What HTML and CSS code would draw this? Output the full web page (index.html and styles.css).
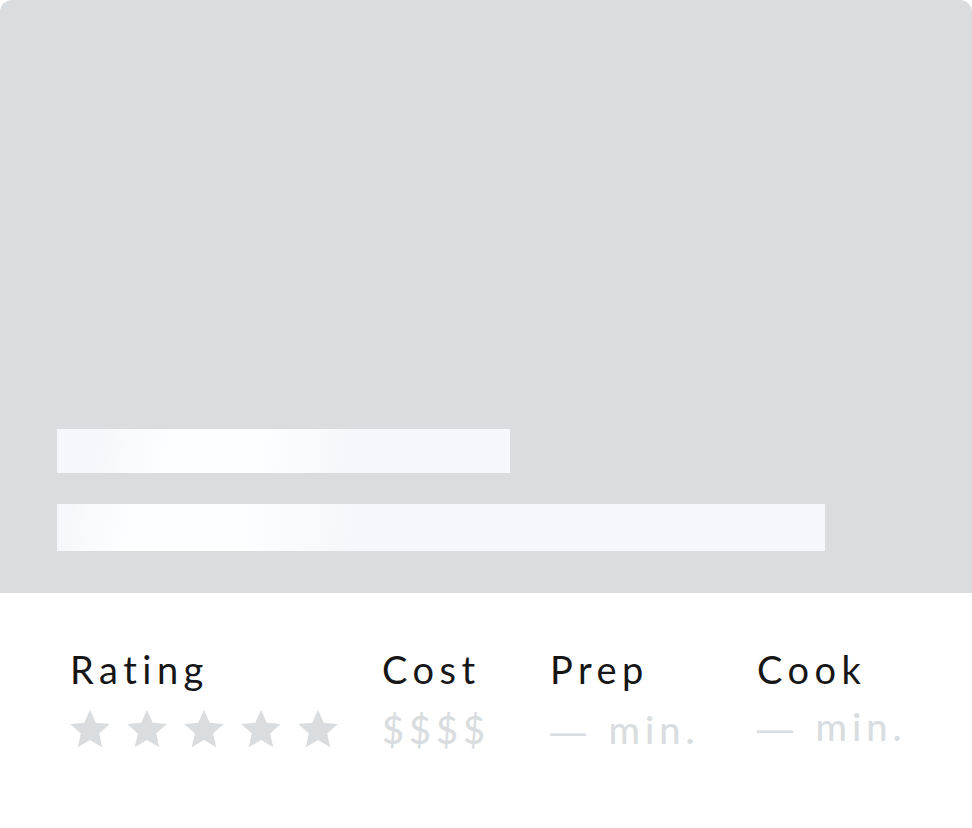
FILE: index.html
```html
<!DOCTYPE html>
<html lang="en">
<head>
    <meta charset="UTF-8">
    <meta name="viewport" content="width=device-width, initial-scale=1.0">
    <title>Recipe Card - Loading</title>
    <link rel="stylesheet" href="styles.css">
</head>
<body>
    <div class="card">
        <div class="card-hero">
            <div class="skeleton skeleton-short"></div>
            <div class="skeleton skeleton-long"></div>
        </div>

        <div class="card-info">
            <div class="info-col col-rating">
                <h3>Rating</h3>
                <div class="stars">
                    <svg viewBox="0 0 24 24"><path d="M12 1.5l3.1 7.1 7.7.7-5.8 5.1 1.7 7.6L12 18l-6.7 4 1.7-7.6-5.8-5.1 7.7-.7z"/></svg>
                    <svg viewBox="0 0 24 24"><path d="M12 1.5l3.1 7.1 7.7.7-5.8 5.1 1.7 7.6L12 18l-6.7 4 1.7-7.6-5.8-5.1 7.7-.7z"/></svg>
                    <svg viewBox="0 0 24 24"><path d="M12 1.5l3.1 7.1 7.7.7-5.8 5.1 1.7 7.6L12 18l-6.7 4 1.7-7.6-5.8-5.1 7.7-.7z"/></svg>
                    <svg viewBox="0 0 24 24"><path d="M12 1.5l3.1 7.1 7.7.7-5.8 5.1 1.7 7.6L12 18l-6.7 4 1.7-7.6-5.8-5.1 7.7-.7z"/></svg>
                    <svg viewBox="0 0 24 24"><path d="M12 1.5l3.1 7.1 7.7.7-5.8 5.1 1.7 7.6L12 18l-6.7 4 1.7-7.6-5.8-5.1 7.7-.7z"/></svg>
                </div>
            </div>
            <div class="info-col col-cost">
                <h3>Cost</h3>
                <p class="placeholder">$$$$</p>
            </div>
            <div class="info-col col-prep">
                <h3>Prep</h3>
                <p class="placeholder"><span class="dash">—</span> min.</p>
            </div>
            <div class="info-col col-cook">
                <h3>Cook</h3>
                <p class="placeholder placeholder-cook"><span class="dash">—</span> min.</p>
            </div>
        </div>
    </div>
</body>
</html>
```

FILE: styles.css
```css
body {
    margin: 0;
    padding: 0;
    background-color: #ffffff;
    font-family: Lato, "Open Sans", sans-serif;
}

.card {
    width: 972px;
    height: 828px;
    border-radius: 12px;
    overflow: hidden;
    background-color: #ffffff;
}

.card-hero {
    height: 593px;
    background-color: #d9dde0;
    box-sizing: border-box;
    padding: 429px 0 0 57px;
}

.skeleton-short {
    width: 453px;
    height: 44px;
    margin-bottom: 31px;
    background: linear-gradient(100deg, #f4f7fb 8%, #fdfeff 25%, #fdfeff 45%, #f4f7fb 65%, #f4f7fb 100%);
}

.skeleton-long {
    width: 768px;
    height: 47px;
    background: linear-gradient(100deg, #f4f7fb 0%, #fdfeff 10%, #fdfeff 24%, #f4f7fb 40%, #f4f7fb 100%);
}

.card-info {
    display: grid;
    grid-template-columns: 312px 168px 207px auto;
    padding: 52px 0 0 70px;
}

.info-col h3 {
    margin: 0;
    font-size: 38px;
    font-weight: 400;
    letter-spacing: 5.5px;
    color: #161616;
    line-height: 48px;
}

.stars {
    display: flex;
    gap: 13px;
    margin-top: 14px;
    margin-left: -2px;
}

.stars svg {
    width: 44px;
    height: 44px;
    fill: #d9dde0;
}

.placeholder {
    margin: 12px 0 0;
    font-size: 38px;
    font-weight: 500;
    letter-spacing: 5px;
    color: #d9dde0;
    line-height: 48px;
}

.placeholder-cook {
    margin-top: 9px;
}

.dash {
    font-family: "Liberation Sans", sans-serif;
    font-weight: 400;
    font-size: 36px;
    letter-spacing: 8px;
}
```
